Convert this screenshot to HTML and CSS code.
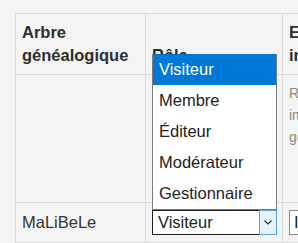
FILE: index.html
```html
<!DOCTYPE html>
<html lang="fr">
<head>
    <meta charset="UTF-8">
    <meta name="viewport" content="width=device-width, initial-scale=1.0">
    <title>Membres</title>
    <link rel="stylesheet" href="styles.css">
</head>
<body>

<table class="members">
    <thead>
        <tr>
            <th class="col-tree">Arbre généalogique</th>
            <th class="col-role">Rôle</th>
            <th class="col-extra">Envoyer une<br>invitation</th>
        </tr>
    </thead>
    <tbody>
        <tr class="info-row">
            <td></td>
            <td></td>
            <td class="hint">Rôle attribué<br>importé du<br>gestionnaire</td>
        </tr>
        <tr>
            <td>MaLiBeLe</td>
            <td>
                <div class="picker">
                    <!-- open dropdown list -->
                    <ul class="options">
                        <li class="selected">Visiteur</li>
                        <li>Membre</li>
                        <li>Éditeur</li>
                        <li>Modérateur</li>
                        <li>Gestionnaire</li>
                    </ul>
                    <div class="select-box">
                        <span class="value">Visiteur</span>
                        <span class="arrow">
                            <svg width="8" height="5" viewBox="0 0 8 5"><polyline points="0.5,0.5 4,4 7.5,0.5" fill="none" stroke="#333" stroke-width="1.2"/></svg>
                        </span>
                    </div>
                </div>
            </td>
            <td><div class="field">I</div></td>
        </tr>
    </tbody>
</table>

</body>
</html>
```

FILE: styles.css
```css
/* Basic Reset */
* {
    box-sizing: border-box;
    margin: 0;
    padding: 0;
}

body {
    background-color: #f4f4f4;
    color: #333;
    font-family: "Liberation Sans", Arial, sans-serif;
    font-size: 16.5px;
    line-height: 23px;
    padding: 13px 0 0 15px;
    overflow: hidden;
    width: 298px;
    height: 243px;
}

/* Members table */
.members {
    border-collapse: collapse;
    table-layout: fixed;
    width: 420px;
}

.members th,
.members td {
    border: 1px solid #dcdcdc;
    padding: 7px 6px;
    text-align: left;
}

.members th {
    font-weight: bold;
    vertical-align: bottom;
    color: #2e2e2e;
}

.members td {
    vertical-align: middle;
}

.col-tree {
    width: 130px;
}

.col-role {
    width: 137px;
}

.info-row td {
    height: 128px;
    vertical-align: top;
}

.hint {
    color: #8a8a8a;
    font-size: 14px;
    line-height: 22px;
    white-space: nowrap;
}

/* Select with its open list */
.picker {
    position: relative;
    width: 125px;
}

.select-box {
    display: flex;
    height: 25px;
    background-color: #fff;
    border: 1px solid #1e1e1e;
    color: #222;
}

.select-box .value {
    flex: 1;
    padding-left: 5px;
    line-height: 23px;
}

.select-box .arrow {
    width: 18px;
    margin: -1px -1px -1px 0;
    background-color: #e5f1fb;
    border: 1px solid #5a9fe0;
    display: flex;
    align-items: center;
    justify-content: center;
}

.options {
    position: absolute;
    left: 0;
    bottom: 100%;
    width: 125px;
    list-style: none;
    background-color: #fff;
    border: 1px solid #7a7a7a;
    border-top: none;
    color: #222;
}

.options li {
    height: 31px;
    line-height: 31px;
    padding-left: 6px;
}

.options li.selected {
    background-color: #0078d7;
    color: #fff;
}

.field {
    height: 25px;
    width: 120px;
    background-color: #fff;
    border: 1px solid #8a8a8a;
    padding-left: 4px;
    line-height: 23px;
    color: #222;
}
```
